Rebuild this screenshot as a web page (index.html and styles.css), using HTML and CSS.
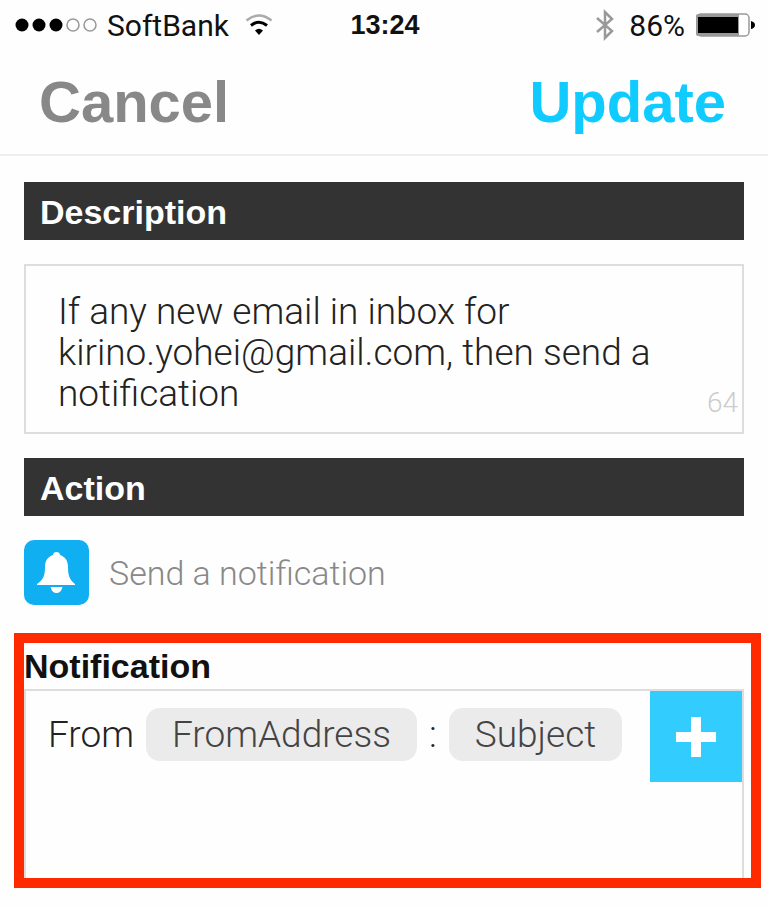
FILE: index.html
```html
<!DOCTYPE html>
<html lang="en">
<head>
<meta charset="utf-8">
<meta name="viewport" content="width=device-width, initial-scale=1">
<title>Edit recipe</title>
<link rel="stylesheet" href="styles.css">
</head>
<body>
<div class="status">
  <div class="status-left">
    <svg class="signal" viewBox="0 0 82 16" aria-hidden="true">
      <g fill="#000"><circle cx="7" cy="8" r="6.5"/><circle cx="24" cy="8" r="6.5"/><circle cx="41" cy="8" r="6.5"/></g>
      <g fill="none" stroke="#999" stroke-width="1.5"><circle cx="58" cy="8" r="6"/><circle cx="75" cy="8" r="6"/></g>
    </svg>
    <span>SoftBank</span>
    <svg class="wifi" viewBox="0 0 28 22" aria-hidden="true">
      <path d="M1.500 6.500Q14-3.500 26.500 6.500" fill="none" stroke="#aaa" stroke-width="2.500"/>
      <path d="M6 11.500Q14 5 22 11.500" fill="none" stroke="#000" stroke-width="3"/>
      <path d="M10 16.500Q14 13 18 16.500L14 21Z" fill="#000"/>
    </svg>
  </div>
  <time class="clock">13:24</time>
  <div class="status-right">
    <svg class="bluetooth" viewBox="0 0 20 32" aria-hidden="true"><path d="M2 9L17 22L10 29V3L17 10L2 23" fill="none" stroke="#999" stroke-width="2.500"/></svg>
    <span>86%</span>
    <svg class="battery" viewBox="0 0 60 24" aria-hidden="true">
      <rect x="2" y="1" width="52" height="22" rx="4" fill="#fff" stroke="#999" stroke-width="1.500"/>
      <path d="M3 1H44V23H3Q1 23 1 21V3Q1 1 3 1Z" fill="#999"/>
      <rect x="3" y="4" width="40" height="16" fill="#000"/>
      <path d="M56 8Q60 9 60 12T56 16Z" fill="#000"/>
    </svg>
  </div>
</div>
<header class="nav">
  <button class="nav-button" type="button">Cancel</button>
  <button class="nav-button primary" type="button">Update</button>
</header>
<main>
  <h2 class="bar"><label for="description">Description</label></h2>
  <div class="description">
    <textarea id="description" rows="3">If any new email in inbox for kirino.yohei@gmail.com, then send a notification</textarea>
    <span class="count">64</span>
  </div>
  <h2 class="bar">Action</h2>
  <div class="action">
    <svg class="bell" viewBox="0 0 65 65" aria-hidden="true">
      <rect width="65" height="65" rx="10" fill="#10aff2"/>
      <path d="M32.500 12C30.500 12 29 13 29 15C23.500 17 21 21 21 27C21 36 19 40 13 44V45H51V44C46 40 44 36 44 27C44 21 41.500 17 36 15C36 13 34.500 12 32.500 12Z" fill="#fff"/>
      <path d="M26.500 47H38.500Q37 53 32.500 53T26.500 47Z" fill="#fff"/>
    </svg>
    <span>Send a notification</span>
  </div>
  <section class="notification">
    <h3 id="notification-label">Notification</h3>
    <div class="field">
      <div class="template" role="textbox" aria-labelledby="notification-label" contenteditable="true" spellcheck="false"><span>From</span><span class="token">FromAddress</span><span>:</span><span class="token">Subject</span></div>
      <button class="add" type="button" aria-label="Add ingredient">
        <svg viewBox="0 0 40 40" aria-hidden="true"><path d="M15 0H25V15H40V25H25V40H15V25H0V15H15Z" fill="#fff"/></svg>
      </button>
    </div>
  </section>
</main>
</body>
</html>
```
FILE: styles.css
```css
* { box-sizing: border-box; }
body {
  margin: 0;
  background: #fefefe;
  color: #111;
  font-family: "Liberation Sans", Arial, sans-serif;
}
button { padding: 0; border: 0; background: none; font: inherit; cursor: pointer; }
h2, h3 { margin: 0; font-size: 34px; font-weight: bold; }
svg { display: block; flex: none; }

.status {
  display: grid;
  grid-template-columns: 1fr auto 1fr;
  align-items: center;
  height: 50px;
  padding: 0 13px 0 15px;
  font-size: 30px;
}
.status-left, .status-right { display: flex; align-items: center; gap: 10px; }
.status-left span, .status-right span { font-family: Roboto, sans-serif; }
.status-right { justify-content: flex-end; }
.signal { width: 82px; height: 16px; }
.wifi { width: 28px; height: 22px; margin-left: 6px; }
.clock { font-size: 27px; font-weight: bold; }
.bluetooth { width: 20px; height: 32px; margin-right: 4px; }
.battery { width: 60px; height: 24px; }

.nav {
  display: flex;
  justify-content: space-between;
  align-items: center;
  height: 106px;
  padding: 0 42px 0 39px;
  border-bottom: 2px solid #eee;
}
.nav-button { color: #888; font-size: 58px; font-weight: bold; line-height: 64px; }
.primary { color: #10cbff; }

main { padding: 26px 24px 0; }
.bar {
  height: 58px;
  padding: 0 16px;
  background: #333;
  color: #fff;
  line-height: 60px;
}
.description { position: relative; margin: 24px 0; border: 2px solid #ddd; }
.description textarea {
  display: block;
  width: 100%;
  height: 166px;
  padding: 25px 32px;
  border: 0;
  outline: 0;
  resize: none;
  overflow: hidden;
  background: none;
  color: #222;
  font: 300 37px/41px Roboto, sans-serif;
}
.count { position: absolute; right: 4px; bottom: 12px; color: #ccc; font: 300 28px/34px Roboto, sans-serif; }

.action {
  display: flex;
  align-items: center;
  gap: 20px;
  margin: 24px 0 28px;
  color: #888;
  font: 300 34px/40px Roboto, sans-serif;
}
.bell { width: 65px; height: 65px; }

.notification {
  margin: 0 -17px 0 -10px;
  padding-right: 7px;
  border: 10px solid #ff2a00;
}
.notification h3 { height: 46px; line-height: 46px; }
.field {
  display: flex;
  justify-content: space-between;
  align-items: flex-start;
  min-height: 189px;
  border: 2px solid #ddd;
  border-bottom: 0;
}
.template {
  display: flex;
  flex: 1;
  flex-wrap: wrap;
  align-items: center;
  gap: 12px;
  padding: 17px 0 0 22px;
  outline: 0;
  color: #222;
  font: 300 37px/53px Roboto, sans-serif;
}
.token { padding: 0 26px; border-radius: 14px; background: #ebebeb; color: #444; }
.add {
  display: grid;
  place-items: center;
  width: 92px;
  height: 91px;
  background: #3cf;
}
.add svg { width: 40px; height: 40px; }
```
